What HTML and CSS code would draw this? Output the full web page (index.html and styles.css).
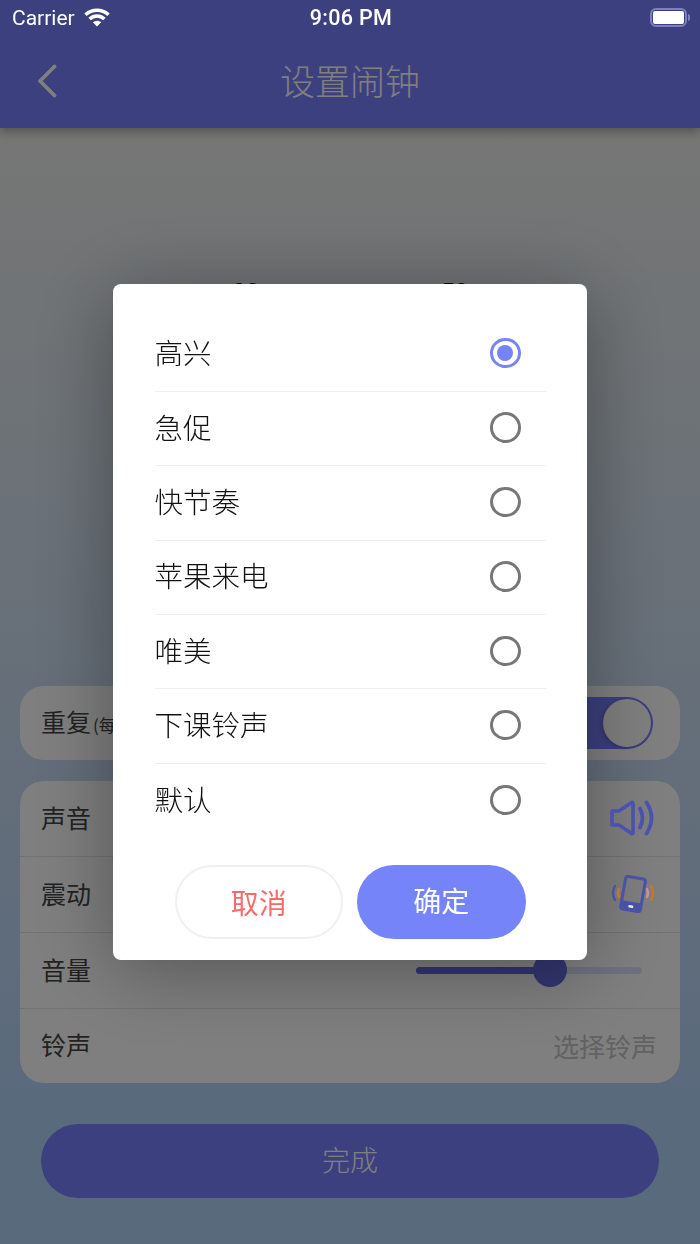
FILE: index.html
```html
<!DOCTYPE html>
<html lang="zh">
<head>
    <meta charset="UTF-8">
    <title>设置闹钟</title>
    <link rel="stylesheet" href="styles.css">
</head>
<body>

<div class="app">
    <div class="header">
        <div class="status">
            <div class="status-left">
                <span>Carrier</span>
                <svg class="wifi" width="26" height="19" viewBox="0 0 26 19">
                    <path d="M1.500 6.800C8 .8 18 .8 24.500 6.800M5.600 11C10 7 16 7 20.400 11" fill="none" stroke="#fff" stroke-width="3.600"/>
                    <path d="M8.800 14.200c2.600-2 5.800-2 8.400 0L13 18.500z" fill="#fff"/>
                </svg>
            </div>
            <div class="status-time">9:06 PM</div>
            <div class="status-right">
                <div class="battery"><div class="battery-fill"></div></div>
                <div class="battery-cap"></div>
            </div>
        </div>
        <div class="nav">
            <svg class="back" width="22" height="34" viewBox="0 0 22 34">
                <path d="M18.500 2.500L4 17l14.500 14.500" fill="none" stroke="#fff" stroke-width="3.800" stroke-linecap="round" stroke-linejoin="round"/>
            </svg>
            <div class="nav-title">设置闹钟</div>
        </div>
    </div>

    <div class="picker">
        <div class="picker-num">00</div>
        <div class="picker-num">50</div>
    </div>

    <div class="card">
        <div class="row row-repeat">
            <div class="row-label">重复<span class="row-sub">(每天)</span></div>
            <div class="toggle"><div class="toggle-thumb"></div></div>
        </div>
    </div>

    <div class="card card-group">
        <div class="row">
            <div class="row-label">声音</div>
            <svg class="icon-sound" width="46" height="36" viewBox="0 0 46 36">
                <path d="M2 11h7L21.500 2.500q1.500-.7 1.500 1v29q0 1.700-1.500 1L9 25H2z" fill="none" stroke="#4a52b0" stroke-width="3.600" stroke-linejoin="round"/>
                <path d="M30 8.500q5 9.500 0 19M36.500 2.500q10 15.500 0 31" fill="none" stroke="#4a52b0" stroke-width="3.800" stroke-linecap="round"/>
            </svg>
        </div>
        <div class="row">
            <div class="row-label">震动</div>
            <svg class="icon-shake" width="44" height="38" viewBox="0 0 44 38">
                <g transform="rotate(10 22 19)">
                    <rect x="12" y="2.500" width="20" height="33" rx="2.500" fill="none" stroke="#4a52a8" stroke-width="3"/>
                    <rect x="11" y="27" width="22" height="9.500" rx="2.500" fill="#4a52a8"/>
                    <rect x="19.500" y="30.500" width="5" height="2.500" rx="1" fill="#e8e8ee"/>
                </g>
                <path d="M4 11q-4 7 0 14" fill="none" stroke="#4a52a8" stroke-width="2.500" stroke-linecap="round"/>
                <path d="M8 14q-2 4 0 8" fill="none" stroke="#c27a2a" stroke-width="2.500" stroke-linecap="round"/>
                <path d="M36 14q2 4 0 8" fill="none" stroke="#c890a0" stroke-width="2.500" stroke-linecap="round"/>
                <path d="M40 11q4 7 0 14" fill="none" stroke="#c27a2a" stroke-width="2.500" stroke-linecap="round"/>
            </svg>
        </div>
        <div class="row">
            <div class="row-label">音量</div>
            <div class="slider">
                <div class="slider-fill"></div>
                <div class="slider-thumb"></div>
            </div>
        </div>
        <div class="row">
            <div class="row-label">铃声</div>
            <div class="row-value">选择铃声</div>
        </div>
    </div>

    <div class="done">完成</div>
</div>

<div class="mask">
    <div class="dialog">
        <ul class="tone-list">
            <li class="tone"><span>高兴</span><i class="radio radio-on"></i></li>
            <li class="tone"><span>急促</span><i class="radio"></i></li>
            <li class="tone"><span>快节奏</span><i class="radio"></i></li>
            <li class="tone"><span>苹果来电</span><i class="radio"></i></li>
            <li class="tone"><span>唯美</span><i class="radio"></i></li>
            <li class="tone"><span>下课铃声</span><i class="radio"></i></li>
            <li class="tone"><span>默认</span><i class="radio"></i></li>
        </ul>
        <div class="dialog-btns">
            <div class="btn btn-cancel">取消</div>
            <div class="btn btn-ok">确定</div>
        </div>
    </div>
</div>

</body>
</html>
```

FILE: styles.css
```css
/*重置样式*/
*{margin: 0;padding: 0;list-style: none;box-sizing: border-box;}
html,body{width: 700px;height: 1244px;overflow: hidden;}
body{font-family: "Noto Sans CJK SC", "Noto Sans", sans-serif;color: #444;}

.app{width: 700px;height: 1244px;background: linear-gradient(180deg, #ecedea 10%, #b4d4fa 90%);}

/*顶部*/
.header{height: 128px;background: #7880fe;box-shadow: 0 3px 10px rgba(0,0,0,.35);}
.status{height: 40px;padding: 0 10px 5px 12px;display: flex;align-items: center;justify-content: space-between;position: relative;z-index: 2;color: #fff;font-family: Roboto, "Liberation Sans", sans-serif;font-size: 21px;}
.status-left{display: flex;align-items: center;gap: 9px;width: 200px;}
.status-time{font-size: 21.500px;font-weight: 500;letter-spacing: .3px;}
.status-right{width: 200px;display: flex;justify-content: flex-end;align-items: center;}
.battery{width: 37px;height: 19px;border: 2px solid #7d80bd;border-radius: 6px;padding: 1px;}
.battery-fill{height: 100%;background: #fff;border-radius: 2px;}
.battery-cap{width: 2px;height: 7px;background: #7d80bd;margin-left: 1px;border-radius: 0 2px 2px 0;}
.nav{height: 88px;padding-bottom: 9px;display: flex;align-items: center;justify-content: center;position: relative;}
.back{position: absolute;left: 36px;top: 24px;}
.nav-title{color: #fff;font-size: 35px;line-height: 50px;font-weight: 300;}

/*时间*/
.picker{height: 558px;padding-top: 148px;display: flex;justify-content: center;gap: 182px;}
.picker-num{font-size: 24px;line-height: 32px;color: #000;font-family: Roboto, sans-serif;}

/*卡片*/
.card{margin: 0 20px;background: #fff;border-radius: 24px;}
.card-group{margin-top: 21px;height: 302px;}
.row{height: 76px;padding: 0 23px 0 21px;display: flex;align-items: center;justify-content: space-between;border-bottom: 1px solid #e4e4e4;}
.row:last-child{height: 74px;border-bottom: 0;}
.row-repeat{padding-right: 27px;}
.row-label{font-size: 25px;line-height: 36px;padding-bottom: 4px;}
.row-repeat .row-label{padding-bottom: 0;}
.row-sub{font-size: 17px;margin-left: 2px;}
.row-value{font-size: 26px;color: #c4c4c4;padding-bottom: 2px;}
.toggle{width: 106px;height: 52px;background: #7880fe;border-radius: 26px;padding: 2px;display: flex;justify-content: flex-end;}
.toggle-thumb{width: 48px;height: 48px;border-radius: 50%;background: #fff;box-shadow: -2px 1px 4px rgba(0,0,0,.2);}
.icon-sound,.icon-shake{flex: none;position: relative;z-index: 2;}
.icon-sound{margin: 0 1px 2px 0;}
.icon-shake{margin: 0 2px 1px 0;}
.slider{width: 226px;height: 7px;margin-right: 15px;border-radius: 4px;background: #dfe2ff;position: relative;}
.slider-fill{width: 134px;height: 7px;border-radius: 4px;background: #666ce0;}
.slider-thumb{position: absolute;left: 117px;top: -14px;width: 34px;height: 34px;border-radius: 50%;background: #666ce0;}
.done{margin: 41px 41px 0;height: 74px;border-radius: 37px;background: #7880fe;color: #fff;font-size: 28px;line-height: 70px;text-align: center;font-weight: 300;}

/*弹窗*/
.mask{position: fixed;left: 0;top: 0;width: 700px;height: 1244px;z-index: 1;background: rgba(0,0,0,.5);}
.dialog{position: absolute;left: 113px;top: 284px;width: 474px;height: 676px;padding: 33.500px 41px 0 41.500px;background: #fff;border-radius: 8px;box-shadow: 0 10px 80px rgba(0,0,0,.35);}
.tone{height: 74.400px;display: flex;align-items: center;justify-content: space-between;padding: 0 25.500px 2px 0;border-bottom: 1px solid #eeeeee;font-size: 28.500px;color: #111;}
.tone span{padding-bottom: 3px;font-weight: 300;}
.tone:last-child{border-bottom: 0;}
.radio{width: 30.500px;height: 30.500px;border: 3.500px solid #777;border-radius: 50%;display: block;}
.radio-on{border-color: #7585f9;position: relative;}
.radio-on:after{content: "";position: absolute;left: 3.750px;top: 3.750px;width: 16px;height: 16px;border-radius: 50%;background: #7585f9;}
.dialog-btns{margin-top: 27px;padding-left: 20px;display: flex;gap: 14px;}
.btn{width: 168.500px;height: 74px;border-radius: 37px;font-size: 28px;line-height: 70px;text-align: center;}
.btn-cancel{border: 2px solid #eef0f3;color: #f96a6a;}
.btn-ok{background: #7585f9;color: #fff;}
```
